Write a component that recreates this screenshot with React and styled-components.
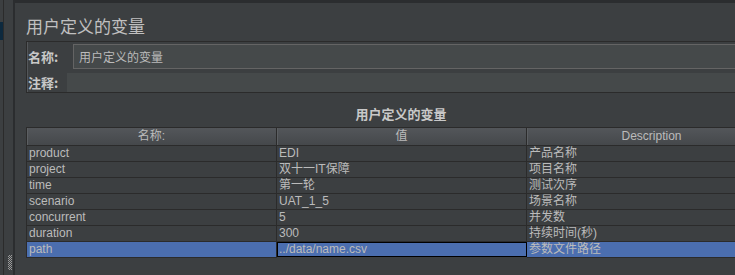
import React from "react";
import styled, { createGlobalStyle } from "styled-components";

const GlobalStyle = createGlobalStyle`
  html, body {
    margin: 0;
    padding: 0;
    background: #3c3f41;
    overflow: hidden;
  }
  body {
    font-family: "Liberation Sans", "Noto Sans CJK SC", sans-serif;
    color: #bbbbbb;
  }
`;

const Frame = styled.div`
  display: flex;
  width: 735px;
  height: 275px;
  overflow: hidden;
`;

const SideStrip = styled.div`
  display: flex;
  width: 15px;
  flex-shrink: 0;
`;

const SideEdge = styled.div`
  width: 3px;
  border-right: 1px solid #2b2b2b;
  padding-top: 22px;
`;

const SideMarker = styled.div`
  width: 3px;
  height: 18px;
  background: #0d293e;
`;

const SideBody = styled.div`
  flex: 1;
  border-right: 2px solid #2b2d2f;
  display: flex;
  flex-direction: column;
  justify-content: flex-end;
  align-items: center;
  padding: 0 0 5px 3px;
`;

const Grip = styled.div`
  width: 4px;
  height: 15px;
  background: repeating-conic-gradient(#9a9a9a 0 25%, transparent 0 50%) 0 0 / 2px 2px;
`;

const Main = styled.div`
  flex: 1;
  min-width: 0;
  display: flex;
  flex-direction: column;
  border-top: 3px solid #2b2d2f;
  padding-left: 11px;
`;

const Heading = styled.div`
  margin-top: 12px;
  height: 26px;
  line-height: 22px;
  font-size: 17px;
  font-family: "Noto Sans CJK SC", sans-serif;
  color: #c0c0c0;
`;

const FormBox = styled.div`
  width: 750px;
  flex-shrink: 0;
  border: 1px solid #2b2b2b;
  border-right: none;
  box-shadow: inset 1px 0 0 #54575a;
  padding-top: 2px;
  display: flex;
  flex-direction: column;
  gap: 4px;
`;

const FormRow = styled.div`
  display: flex;
  align-items: center;
  height: ${(p) => p.$h}px;
`;

const Label = styled.div`
  width: ${(p) => p.$w}px;
  padding-left: 1px;
  box-sizing: border-box;
  font-size: 13px;
  font-weight: bold;
  font-family: "Noto Sans CJK SC", sans-serif;
  color: #c8c8c8;
`;

const Field = styled.div`
  flex: 1;
  align-self: stretch;
  background: #45494a;
  border: ${(p) => (p.$bordered ? "1px solid #646464" : "none")};
  border-right: none;
  display: flex;
  align-items: center;
  padding-left: 5px;
  font-size: 12px;
  font-family: "Noto Sans CJK SC", sans-serif;
  color: #bbbbbb;
`;

const TableTitle = styled.div`
  width: 750px;
  flex-shrink: 0;
  height: 34px;
  box-sizing: border-box;
  padding-top: 13px;
  line-height: 15px;
  text-align: center;
  font-size: 13px;
  font-weight: bold;
  font-family: "Noto Sans CJK SC", sans-serif;
  color: #c8c8c8;
`;

const Grid = styled.div`
  display: grid;
  grid-template-columns: 250px 250px 250px;
  border-left: 1px solid #2b2b2b;
  border-top: 1px solid #2b2b2b;
  width: 750px;
  flex-shrink: 0;
`;

const HeadCell = styled.div`
  height: 17px;
  line-height: 17px;
  text-align: center;
  font-size: 12px;
  border-bottom: 1px solid #2b2b2b;
  border-right: 1px solid #2b2b2b;
  box-shadow: inset 1px 0 0 #5c5f62;
  background: linear-gradient(#53565a, #45484b);
  color: #bbbbbb;
`;

const Cell = styled.div`
  height: 15px;
  line-height: 15px;
  padding-left: 2px;
  font-size: 12px;
  white-space: nowrap;
  overflow: hidden;
  border-bottom: 1px solid #2b2b2b;
  border-right: 1px solid #2b2b2b;
  background: ${(p) => (p.$selected ? "#4b6eaf" : "#3c3f41")};
  color: #bbbbbb;
  ${(p) =>
    p.$editing &&
    `
    border: 1px solid #000;
    border-top: none;
    height: 14px;
    line-height: 14px;
    padding-left: 1px;
    box-shadow: inset 0 1px 0 #000;
  `}
`;

const rows = [
  ["product", "EDI", "产品名称"],
  ["project", "双十一IT保障", "项目名称"],
  ["time", "第一轮", "测试次序"],
  ["scenario", "UAT_1_5", "场景名称"],
  ["concurrent", "5", "并发数"],
  ["duration", "300", "持续时间(秒)"],
  ["path", "../data/name.csv", "参数文件路径"],
];

export default function App() {
  const selected = rows.length - 1;
  return (
    <>
      <GlobalStyle />
      <Frame>
        <SideStrip>
          <SideEdge>
            <SideMarker />
          </SideEdge>
          <SideBody>
            <Grip />
          </SideBody>
        </SideStrip>
        <Main>
          <Heading>用户定义的变量</Heading>
          <FormBox>
            <FormRow $h={25}>
              <Label $w={46}>名称:</Label>
              <Field $bordered>用户定义的变量</Field>
            </FormRow>
            <FormRow $h={19}>
              <Label $w={40}>注释:</Label>
              <Field />
            </FormRow>
          </FormBox>
          <TableTitle>用户定义的变量</TableTitle>
          <Grid>
            <HeadCell>名称:</HeadCell>
            <HeadCell>值</HeadCell>
            <HeadCell>Description</HeadCell>
            {rows.map((r, i) =>
              r.map((v, j) => (
                <Cell
                  key={`${i}-${j}`}
                  $selected={i === selected}
                  $editing={i === selected && j === 1}
                >
                  {v}
                </Cell>
              ))
            )}
          </Grid>
        </Main>
      </Frame>
    </>
  );
}
